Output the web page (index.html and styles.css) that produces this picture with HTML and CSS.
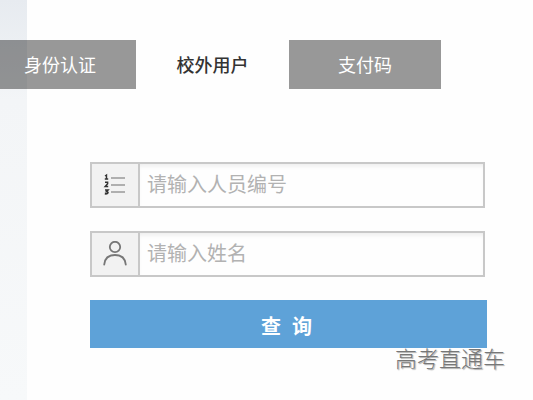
FILE: index.html
```html
<!DOCTYPE html>
<html lang="zh-CN">
    <head>
        <meta charset="utf-8">
        <meta name="viewport" content="width=device-width, initial-scale=1">
        <title>校外用户</title>
        <link rel="stylesheet" href="styles.css">
    </head>
    <body>
        <div class="loginPanel">
            <div class="tabBar">
                <button type="button" class="tab tabFirst">身份认证</button>
                <button type="button" class="tab tabActive">校外用户</button>
                <button type="button" class="tab">支付码</button>
            </div>
            <form class="queryForm">
                <div class="field">
                    <label class="fieldIcon" for="userCode" aria-label="人员编号">
                        <svg width="24" height="24" viewBox="0 0 24 24" fill="none">
                            <path d="M8 5h14M8 12h14M8 19h14" stroke="#999" stroke-width="1.5"/>
                            <path d="M2 3l1.500-1v4M1.800 6h3.400" stroke="#333" stroke-width="1.4"/>
                            <path d="M2 9.200h2.600v1.600L2.200 13.600h3" stroke="#333" stroke-width="1.5"/>
                            <path d="M2 17h3l-1.600 1.800c2.600 0 2 2.600-1.600 2" stroke="#333" stroke-width="1.6"/>
                        </svg>
                    </label>
                    <input class="fieldInput" id="userCode" type="text" placeholder="请输入人员编号">
                </div>
                <div class="field">
                    <label class="fieldIcon" for="userName" aria-label="姓名">
                        <svg width="24" height="26" viewBox="0 0 24 26" fill="none" stroke="#777" stroke-width="1.8" stroke-linecap="round">
                            <circle cx="12" cy="6" r="5.2"/>
                            <path d="M1.200 23.600C1.800 17.400 6 14 12 14s10.200 3.400 10.800 9.600"/>
                        </svg>
                    </label>
                    <input class="fieldInput" id="userName" type="text" placeholder="请输入姓名">
                </div>
                <button type="submit" class="queryButton">查&nbsp;&nbsp;询</button>
            </form>
        </div>
        <div class="watermark">高考直通车</div>
    </body>
</html>
```
FILE: styles.css
```css
* {
  box-sizing: border-box;
}
body {
  margin: 0;
  min-height: 100vh;
  position: relative;
  padding-left: 27px;
  background: linear-gradient(to bottom, #e7ebf0 0%, #f3f5f7 25%, #f7f9fa 100%);
  font-family: "Liberation Sans", "Noto Sans CJK SC", sans-serif;
}
.loginPanel {
  min-height: 100vh;
  padding-top: 40px;
  background: #fefefe;
}

/* tabs hang over the left edge of the panel */
.tabBar {
  display: flex;
  margin-left: -27px;
}
.tab {
  min-width: 152px;
  height: 49px;
  padding: 2px 40px 0;
  border: 0;
  background: rgba(0, 0, 0, 0.4);
  color: #fff;
  font-family: inherit;
  font-size: 18px;
  line-height: 26px;
  white-space: nowrap;
}
.tabFirst {
  min-width: 0;
  padding-left: 24px;
}
.tabActive {
  min-width: 153px;
  background: transparent;
  color: #333;
  font-weight: 500;
}

.queryForm {
  display: flex;
  flex-direction: column;
  gap: 23px;
  margin: 73px 46px 0 63px;
}
.field {
  display: flex;
  height: 46px;
  margin-right: 2px;
  border: 2px solid #c8c8c8;
}
.fieldIcon {
  display: flex;
  align-items: center;
  justify-content: center;
  width: 48px;
  background: #f2f2f2;
  border-right: 2px solid #c8c8c8;
}
.fieldInput {
  flex: 1;
  min-width: 0;
  padding: 0 7px;
  border: 0;
  outline: 0;
  background: #fefefe;
  box-shadow: inset 0 4px 4px -2px #ececec;
  color: #333;
  font-family: inherit;
  font-size: 20px;
}
.fieldInput::placeholder {
  color: #b2b2b2;
}
.queryButton {
  height: 48px;
  padding: 2px 4px 0 0;
  border: 0;
  background: #5ea2d8;
  color: #fff;
  font-family: inherit;
  font-size: 20px;
  font-weight: bold;
}

.watermark {
  position: absolute;
  right: 28px;
  bottom: 24px;
  color: #777;
  font-size: 22px;
  font-weight: 300;
  line-height: 32px;
  text-shadow: 1px 1px 1px #aaa;
}
```
